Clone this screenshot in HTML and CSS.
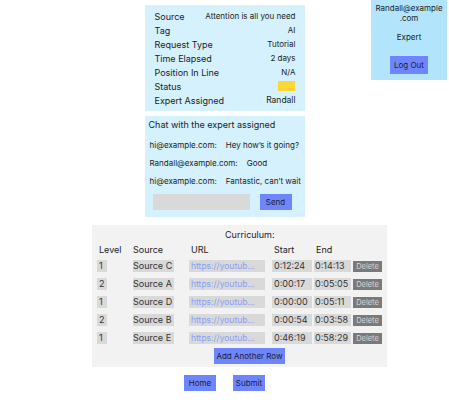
FILE: index.html
```html
<!DOCTYPE html>
<html lang="en">
<head>
<meta charset="utf-8">
<title>Request</title>
<link rel="stylesheet" href="styles.css">
</head>
<body>
<div class="page">
  <aside class="user">
    <div class="user-email">Randall@example<wbr>.com</div>
    <div class="user-role">Expert</div>
    <button class="btn btn-logout">Log Out</button>
  </aside>

  <section class="info">
    <div class="info-row"><span class="label">Source</span><span class="value">Attention is all you need</span></div>
    <div class="info-row"><span class="label">Tag</span><span class="value">AI</span></div>
    <div class="info-row"><span class="label">Request Type</span><span class="value">Tutorial</span></div>
    <div class="info-row"><span class="label">Time Elapsed</span><span class="value">2 days</span></div>
    <div class="info-row"><span class="label">Position In Line</span><span class="value">N/A</span></div>
    <div class="info-row"><span class="label">Status</span><span class="status"></span></div>
    <div class="info-row"><span class="label">Expert Assigned</span><span class="value value-lg">Randall</span></div>
  </section>

  <section class="chat">
    <div class="chat-title">Chat with the expert assigned</div>
    <div class="msg"><span class="sender">hi@example.com:</span><span>Hey how’s it going?</span></div>
    <div class="msg"><span class="sender">Randall@example.com:</span><span>Good</span></div>
    <div class="msg"><span class="sender">hi@example.com:</span><span>Fantastic, can’t wait</span></div>
    <div class="chat-form">
      <span class="chat-input"></span>
      <button class="btn btn-send">Send</button>
    </div>
  </section>

  <section class="curriculum">
    <div class="cur-title">Curriculum:</div>
    <div class="grid">
      <span class="head">Level</span><span class="head">Source</span><span class="head">URL</span><span class="head">Start</span><span class="head">End</span><span class="head"></span>

      <span class="cell">1</span><span class="cell">Source C</span><span class="cell url"><span class="url-text">https://youtub...</span></span><span class="cell">0:12:24</span><span class="cell">0:14:13</span><span class="del">Delete</span>
      <span class="cell">2</span><span class="cell">Source A</span><span class="cell url"><span class="url-text">https://youtub...</span></span><span class="cell">0:00:17</span><span class="cell">0:05:05</span><span class="del">Delete</span>
      <span class="cell">1</span><span class="cell">Source D</span><span class="cell url"><span class="url-text">https://youtub...</span></span><span class="cell">0:00:00</span><span class="cell">0:05:11</span><span class="del">Delete</span>
      <span class="cell">2</span><span class="cell">Source B</span><span class="cell url"><span class="url-text">https://youtub...</span></span><span class="cell">0:00:54</span><span class="cell">0:03:58</span><span class="del">Delete</span>
      <span class="cell">1</span><span class="cell">Source E</span><span class="cell url"><span class="url-text">https://youtub...</span></span><span class="cell">0:46:19</span><span class="cell">0:58:29</span><span class="del">Delete</span>
    </div>
    <button class="btn btn-add">Add Another Row</button>
  </section>

  <div class="actions">
    <button class="btn btn-nav">Home</button>
    <button class="btn btn-nav">Submit</button>
  </div>
</div>
</body>
</html>
```
FILE: styles.css
```css
* { box-sizing: border-box; }
body {
  margin: 0;
  font-family: Inter, "Liberation Sans", sans-serif;
  color: #222;
  background: #fff;
}
.page {
  position: relative;
  width: 449px;
  min-height: 400px;
  display: flex;
  flex-direction: column;
  align-items: center;
  padding-top: 5px;
}
.btn {
  font-family: inherit;
  border: none;
  margin: 0;
  padding: 0;
  background: #6e86fd;
  color: #1d1d2b;
  font-size: 8px;
  cursor: pointer;
}

/* user box */
.user {
  position: absolute;
  top: 0;
  right: 2px;
  width: 76px;
  height: 80px;
  background: #b2e5fc;
  display: flex;
  flex-direction: column;
  align-items: center;
  padding-top: 3px;
  font-size: 8px;
  line-height: 10px;
  text-align: center;
}
.user-email { width: 72px; }
.user-role { margin-top: 9px; }
.btn-logout {
  margin-top: 14px;
  width: 38px;
  height: 18px;
  font-size: 8px;
}

/* info */
.info {
  width: 160px;
  background: #d4f1fd;
  padding: 4px 9px 4px 10px;
}
.info-row {
  display: flex;
  justify-content: space-between;
  align-items: center;
  height: 14px;
}
.label { font-size: 9px; }
.value { font-size: 8px; }
.value-lg { font-size: 8.5px; }
.status {
  width: 17px;
  height: 10px;
  background: #fdd835;
  margin-right: 1px;
}

/* chat */
.chat {
  width: 160px;
  margin-top: 5px;
  background: #d4f1fd;
  padding: 3px 5px 7px 4px;
}
.chat-title {
  font-size: 9px;
  line-height: 12px;
}
.msg {
  font-size: 8px;
  line-height: 12px;
  margin-top: 6px;
  padding-left: 1px;
  display: flex;
  gap: 9px;
  white-space: nowrap;
}
.chat-title + .msg { margin-top: 8px; }
.chat-form {
  display: flex;
  gap: 10px;
  margin-top: 7px;
  padding-left: 4px;
}
.chat-input {
  width: 97px;
  height: 16px;
  background: #d9d9d9;
}
.btn-send {
  width: 32px;
  height: 16px;
}

/* curriculum */
.curriculum {
  align-self: flex-start;
  margin-left: 92px;
  margin-top: 8px;
  width: 295px;
  background: #f2f2f2;
  padding: 4px 0 3px 5px;
}
.cur-title {
  font-size: 9px;
  line-height: 12px;
  margin-left: 128px;
}
.grid {
  display: grid;
  grid-template-columns: 36px 56px 83px 42px 39px 30px;
  grid-template-rows: 10px;
  grid-auto-rows: 12px;
  row-gap: 6px;
  margin-top: 3px;
  font-size: 9px;
  line-height: 12px;
  align-items: center;
  justify-items: start;
}
.head {
  padding-left: 2px;
  height: 12px;
  align-self: start;
}
.grid .head:nth-child(2) { padding-left: 0; }
.cell {
  background: #d9d9d9;
  color: #333;
  height: 12px;
  padding: 0 1px;
  white-space: nowrap;
}
.grid .cell:nth-child(6n+1) { padding: 0 2px; width: 10px; }
.grid .cell:nth-child(6n+2) { width: 41px; padding: 0; }
.url {
  width: 76px;
  color: #86a1f3;
  padding: 0 2px !important;
}
.url-text { font-size: 8.5px; }
.grid .cell:nth-child(6n+4) { width: 40px; padding: 0 2px; }
.grid .cell:nth-child(6n+5) { width: 37px; padding: 0 1px; }
.del {
  background: #7a7a7a;
  color: #d6d6d6;
  font-size: 7.5px;
  height: 11px;
  line-height: 11px;
  width: 29px;
  text-align: center;
}
.btn-add {
  display: block;
  margin: 4px 0 0 117px;
  width: 71px;
  height: 16px;
}

/* actions */
.actions {
  display: flex;
  gap: 17px;
  margin-top: 8px;
}
.btn-nav {
  width: 32px;
  height: 16px;
}
```
